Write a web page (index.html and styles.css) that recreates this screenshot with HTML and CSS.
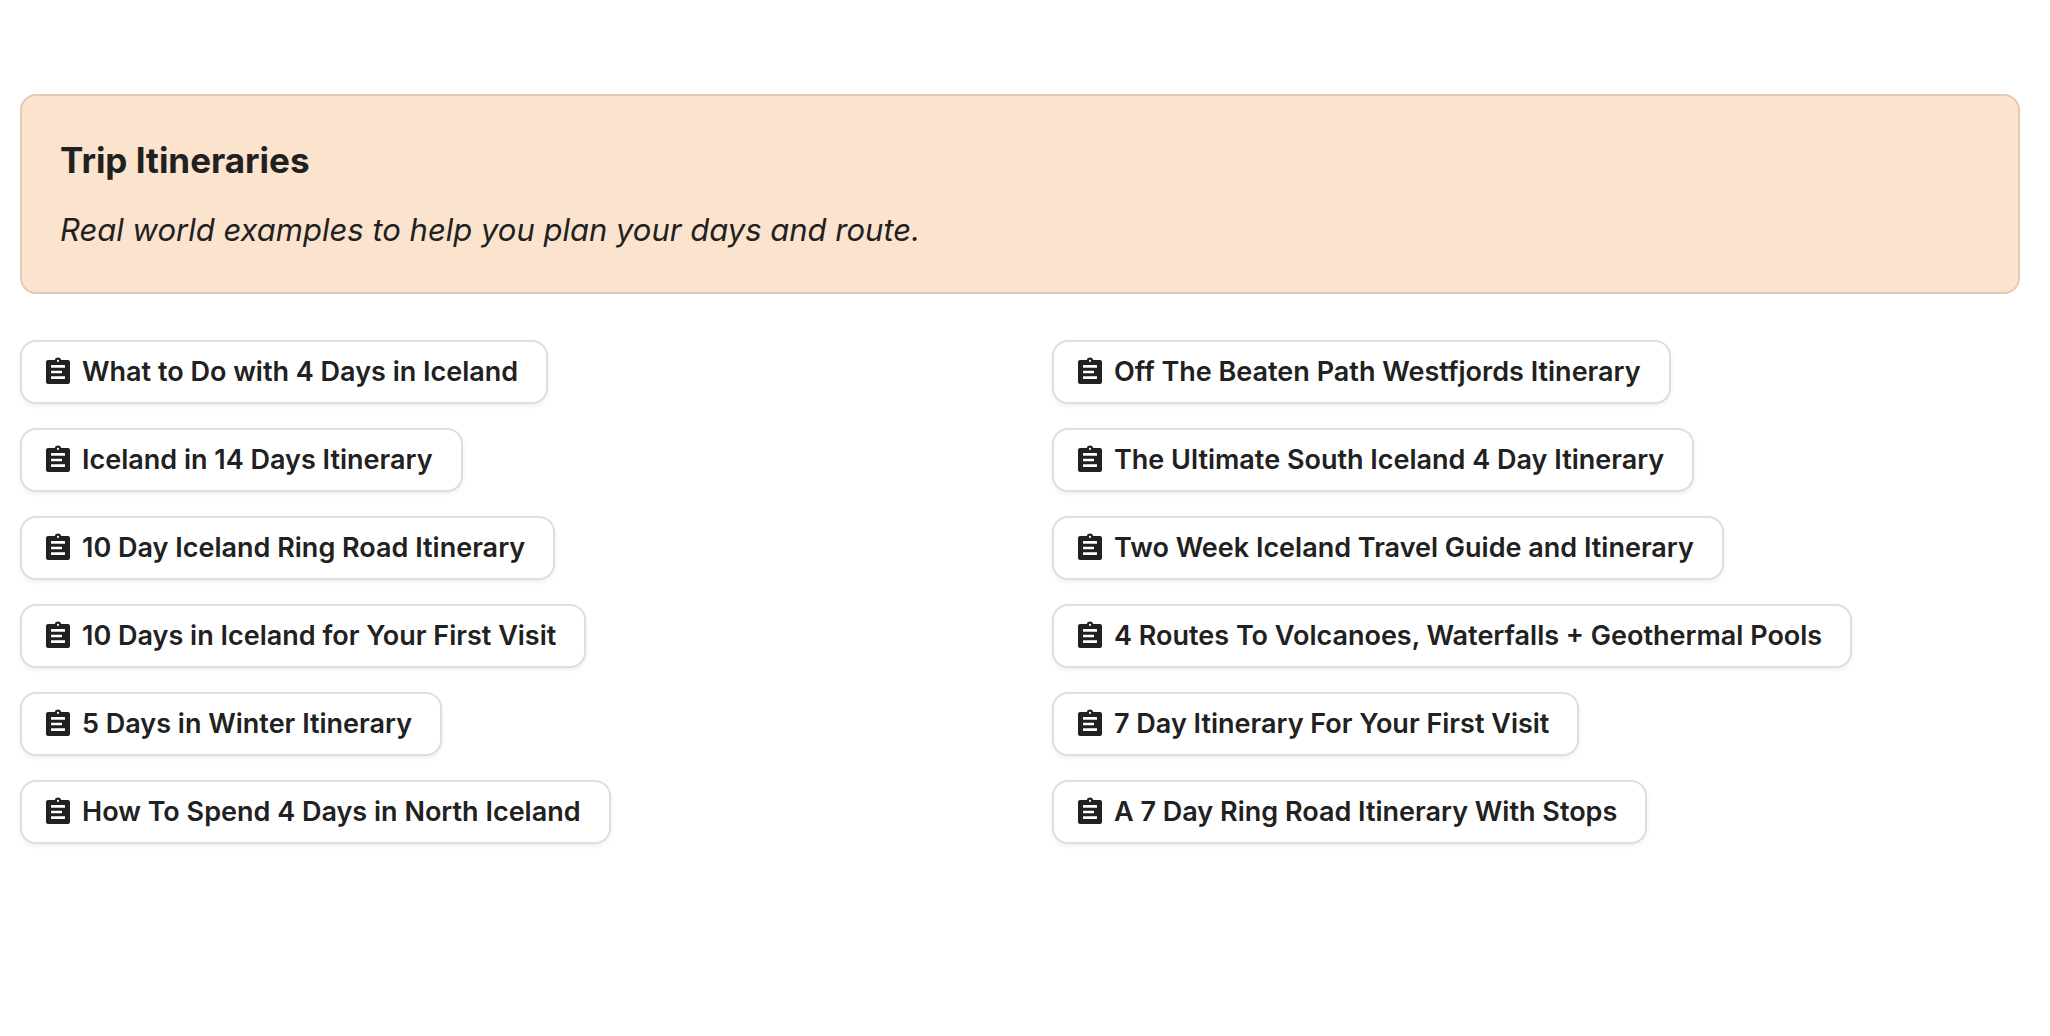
FILE: index.html
```html
<!DOCTYPE html>
<html lang="en">
<head>
    <meta charset="UTF-8">
    <meta name="viewport" content="width=device-width, initial-scale=1.0">
    <title>Trip Itineraries</title>
    <link rel="stylesheet" href="styles.css">
</head>
<body>
    <!-- Clipboard icon shared by all the links -->
    <svg class="sprite" width="0" height="0" aria-hidden="true">
        <symbol id="clipboard" viewBox="0 0 24 24">
            <path fill-rule="evenodd" d="M4.5 3H9.6C10 1.8 10.8 1.2 12 1.2s2 .6 2.4 1.8h5.1c.8 0 1.5.7 1.5 1.5v15c0 .8-.7 1.500-1.500 1.500h-15c-.8 0-1.500-.7-1.500-1.500v-15C3 3.700 3.700 3 4.500 3zM12 2.900a.8.8 0 1 0 0 1.600.8.8 0 0 0 0-1.600zM6.800 6.800v2h10.400v-2zM6.800 11v2H15v-2zM6.800 15.200v2h10.400v-2z"/>
        </symbol>
    </svg>
    <main class="page">
        <header class="callout">
            <h1 class="callout-title">Trip Itineraries</h1>
            <p class="callout-text">Real world examples to help you plan your days and route.</p>
        </header>
        <div class="columns">
            <ul class="column">
                <li><a class="link-button" href="#"><svg class="icon"><use href="#clipboard"/></svg>What to Do with 4 Days in Iceland</a></li>
                <li><a class="link-button" href="#"><svg class="icon"><use href="#clipboard"/></svg>Iceland in 14 Days Itinerary</a></li>
                <li><a class="link-button" href="#"><svg class="icon"><use href="#clipboard"/></svg>10 Day Iceland Ring Road Itinerary</a></li>
                <li><a class="link-button" href="#"><svg class="icon"><use href="#clipboard"/></svg>10 Days in Iceland for Your First Visit</a></li>
                <li><a class="link-button" href="#"><svg class="icon"><use href="#clipboard"/></svg>5 Days in Winter Itinerary</a></li>
                <li><a class="link-button" href="#"><svg class="icon"><use href="#clipboard"/></svg>How To Spend 4 Days in North Iceland</a></li>
            </ul>
            <ul class="column">
                <li><a class="link-button" href="#"><svg class="icon"><use href="#clipboard"/></svg>Off The Beaten Path Westfjords Itinerary</a></li>
                <li><a class="link-button" href="#"><svg class="icon"><use href="#clipboard"/></svg>The Ultimate South Iceland 4 Day Itinerary</a></li>
                <li><a class="link-button" href="#"><svg class="icon"><use href="#clipboard"/></svg>Two Week Iceland Travel Guide and Itinerary</a></li>
                <li><a class="link-button" href="#"><svg class="icon"><use href="#clipboard"/></svg>4 Routes To Volcanoes, Waterfalls + Geothermal Pools</a></li>
                <li><a class="link-button" href="#"><svg class="icon"><use href="#clipboard"/></svg>7 Day Itinerary For Your First Visit</a></li>
                <li><a class="link-button" href="#"><svg class="icon"><use href="#clipboard"/></svg>A 7 Day Ring Road Itinerary With Stops</a></li>
            </ul>
        </div>
    </main>
</body>
</html>
```

FILE: styles.css
```css
* {
    box-sizing: border-box;
}

body {
    margin: 0;
    background-color: #fff;
    color: #212121;
    font-family: Inter, "Liberation Sans", sans-serif;
}

.sprite {
    display: block;
}

.page {
    padding: 94px 30px 40px 20px;
}

.callout {
    padding: 38px 38px 40px;
    border: 2px solid #e3cab6;
    border-radius: 16px;
    background-color: #fbe3cd;
}

.callout-title {
    margin: 0 0 22px;
    font-size: 35px;
    line-height: 52px;
    font-weight: 700;
}

.callout-text {
    margin: 0;
    font-size: 31px;
    line-height: 44px;
    font-style: italic;
}

.columns {
    display: grid;
    grid-template-columns: 1fr 1fr;
    gap: 64px;
    margin-top: 46px;
}

.column {
    display: flex;
    flex-direction: column;
    gap: 24px;
    margin: 0;
    padding: 0;
    list-style: none;
}

.column li {
    display: flex;
}

.link-button {
    display: flex;
    align-items: center;
    gap: 8px;
    min-height: 64px;
    padding: 10px 28px 10px 20px;
    border: 2px solid #dedede;
    border-radius: 16px;
    background-color: #fff;
    box-shadow: 0 2px 4px rgba(0, 0, 0, 0.07);
    color: inherit;
    font-size: 27px;
    line-height: 40px;
    font-weight: 600;
    text-decoration: none;
}

.icon {
    flex: none;
    width: 32px;
    height: 32px;
    fill: currentColor;
}
```
